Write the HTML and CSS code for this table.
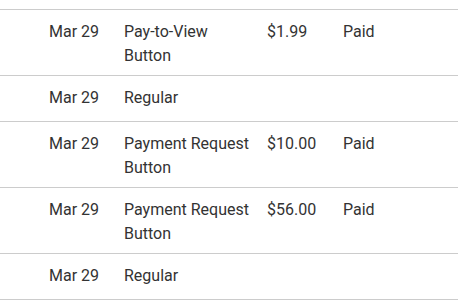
FILE: index.html
```html
<!DOCTYPE html>
<html>
<head>
<meta charset="utf-8">
<link rel="stylesheet" href="styles.css">
</head>
<body>
<div class="table">
  <div class="row">
    <div class="cell date">Mar 29</div>
    <div class="cell desc">Pay-to-View Button</div>
    <div class="cell amount">$1.99</div>
    <div class="cell status">Paid</div>
  </div>
  <div class="row">
    <div class="cell date">Mar 29</div>
    <div class="cell desc">Regular</div>
    <div class="cell amount"></div>
    <div class="cell status"></div>
  </div>
  <div class="row">
    <div class="cell date">Mar 29</div>
    <div class="cell desc">Payment Request Button</div>
    <div class="cell amount">$10.00</div>
    <div class="cell status">Paid</div>
  </div>
  <div class="row">
    <div class="cell date">Mar 29</div>
    <div class="cell desc">Payment Request Button</div>
    <div class="cell amount">$56.00</div>
    <div class="cell status">Paid</div>
  </div>
  <div class="row">
    <div class="cell date">Mar 29</div>
    <div class="cell desc">Regular</div>
    <div class="cell amount"></div>
    <div class="cell status"></div>
  </div>
</div>
</body>
</html>
```
FILE: styles.css
```css
html, body {
  margin: 0;
  padding: 0;
  background: #ffffff;
}
body {
  font-family: Roboto, "Noto Sans", sans-serif;
  font-size: 16px;
  line-height: 24px;
  color: #333333;
}
.table {
  margin-top: 9px;
  border-top: 1px solid #cccccc;
  width: 458px;
}
.row {
  display: grid;
  grid-template-columns: 75px 143px 76px 1fr;
  padding: 10px 0 7px 49px;
  min-height: 46px;
  box-sizing: border-box;
  border-bottom: 1px solid #cccccc;
}
.desc {
  padding-right: 15px;
}
```
